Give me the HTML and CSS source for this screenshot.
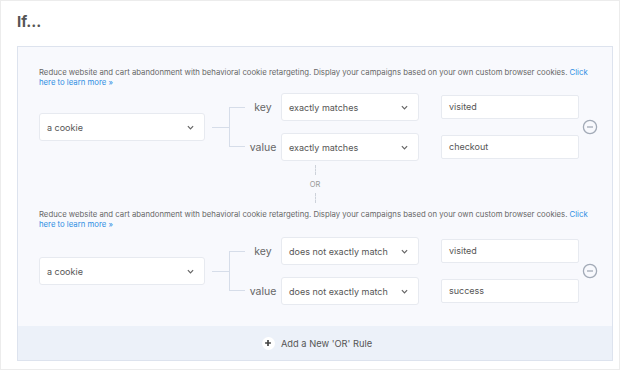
FILE: index.html
```html
<!DOCTYPE html>
<html lang="en">
<head>
    <meta charset="UTF-8">
    <meta name="viewport" content="width=device-width, initial-scale=1.0">
    <title>Cookie Retargeting Rules</title>
    <link rel="stylesheet" href="styles.css">
</head>
<body>
    <div class="card">
        <h2 class="card-title">If...</h2>

        <div class="panel">
            <!-- Rule 1 -->
            <div class="rule">
                <p class="rule-desc">Reduce website and cart abandonment with behavioral cookie retargeting. Display your campaigns based on your own custom browser cookies. <a href="#">Click here to learn more &raquo;</a></p>
                <div class="rule-row">
                    <div class="select select-target">
                        <span>a cookie</span>
                        <svg class="chevron" viewBox="0 0 8 5"><path d="M1 1l3 3 3-3"/></svg>
                    </div>
                    <div class="branch">
                        <span class="stub"></span>
                        <span class="bracket"></span>
                    </div>
                    <div class="pairs">
                        <div class="pair">
                            <span class="pair-label">key</span>
                            <div class="select select-op">
                                <span>exactly matches</span>
                                <svg class="chevron" viewBox="0 0 8 5"><path d="M1 1l3 3 3-3"/></svg>
                            </div>
                            <div class="field">visited</div>
                        </div>
                        <div class="pair">
                            <span class="pair-label">value</span>
                            <div class="select select-op">
                                <span>exactly matches</span>
                                <svg class="chevron" viewBox="0 0 8 5"><path d="M1 1l3 3 3-3"/></svg>
                            </div>
                            <div class="field">checkout</div>
                        </div>
                    </div>
                    <button class="remove" title="Remove rule">
                        <svg viewBox="0 0 16 16"><circle cx="8" cy="8" r="6.6"/><path d="M5 8h6"/></svg>
                    </button>
                </div>
            </div>

            <div class="or-divider">
                <span class="dash"></span>
                <span class="or-label">OR</span>
                <span class="dash"></span>
            </div>

            <!-- Rule 2 -->
            <div class="rule rule-second">
                <p class="rule-desc">Reduce website and cart abandonment with behavioral cookie retargeting. Display your campaigns based on your own custom browser cookies. <a href="#">Click here to learn more &raquo;</a></p>
                <div class="rule-row">
                    <div class="select select-target">
                        <span>a cookie</span>
                        <svg class="chevron" viewBox="0 0 8 5"><path d="M1 1l3 3 3-3"/></svg>
                    </div>
                    <div class="branch">
                        <span class="stub"></span>
                        <span class="bracket"></span>
                    </div>
                    <div class="pairs">
                        <div class="pair">
                            <span class="pair-label">key</span>
                            <div class="select select-op">
                                <span>does not exactly match</span>
                                <svg class="chevron" viewBox="0 0 8 5"><path d="M1 1l3 3 3-3"/></svg>
                            </div>
                            <div class="field">visited</div>
                        </div>
                        <div class="pair">
                            <span class="pair-label">value</span>
                            <div class="select select-op">
                                <span>does not exactly match</span>
                                <svg class="chevron" viewBox="0 0 8 5"><path d="M1 1l3 3 3-3"/></svg>
                            </div>
                            <div class="field">success</div>
                        </div>
                    </div>
                    <button class="remove" title="Remove rule">
                        <svg viewBox="0 0 16 16"><circle cx="8" cy="8" r="6.6"/><path d="M5 8h6"/></svg>
                    </button>
                </div>
            </div>

            <div class="add-rule">
                <span class="add-icon">
                    <svg viewBox="0 0 12 12"><path d="M6 2.5v7M2.5 6h7"/></svg>
                </span>
                <span>Add a New 'OR' Rule</span>
            </div>
        </div>
    </div>
</body>
</html>
```

FILE: styles.css
```css
body {
    margin: 0;
    font-family: Inter, "Open Sans", Arial, sans-serif;
    background-color: #ffffff;
}

.card {
    width: 620px;
    height: 370px;
    box-sizing: border-box;
    border: 1px solid #ececec;
    padding: 11px 6px 0 16px;
    background: white;
}

.card-title {
    margin: 0 0 14px 0;
    font-size: 15px;
    line-height: 20px;
    font-weight: 700;
    color: #555;
}

.panel {
    border: 1px solid #dde3ee;
    background: #f8f9fd;
}

.rule {
    padding: 20px 14px 0 21px;
}

.rule-second {
    padding-top: 0;
}

.rule-desc {
    margin: 0 0 6px 0;
    font-size: 7.75px;
    line-height: 10px;
    color: #666;
    max-width: 556px;
}

.rule-desc a {
    color: #2d8ee3;
    text-decoration: none;
}

.rule-second .rule-desc {
    margin-bottom: 8px;
}

.rule-row {
    display: flex;
    align-items: center;
}

.select {
    display: flex;
    align-items: center;
    justify-content: space-between;
    box-sizing: border-box;
    height: 28px;
    padding: 0 10px 0 7px;
    background: white;
    border: 1px solid #e7eaf0;
    border-radius: 3px;
    font-size: 9px;
    color: #555;
}

.select-target {
    width: 166px;
}

.select-op {
    width: 138px;
}

.chevron {
    width: 7px;
    height: 5px;
    fill: none;
    stroke: #666;
    stroke-width: 1.4;
}

.branch {
    display: flex;
    align-items: center;
    width: 40px;
}

.stub {
    width: 17px;
    height: 1px;
    margin-left: 7px;
    background: #d6dde9;
}

.bracket {
    width: 16px;
    height: 40px;
    box-sizing: border-box;
    border: 1px solid #d6dde9;
    border-right: none;
}

.pairs {
    display: flex;
    flex-direction: column;
    gap: 12px;
}

.pair {
    display: flex;
    align-items: center;
}

.pair-label {
    width: 36px;
    text-align: center;
    font-size: 10.5px;
    color: #666;
}

.field {
    box-sizing: border-box;
    width: 138px;
    height: 24px;
    margin-left: 22px;
    padding: 0 7px;
    line-height: 22px;
    background: white;
    border: 1px solid #e7eaf0;
    border-radius: 2px;
    font-size: 9px;
    color: #555;
}

.remove {
    width: 16px;
    height: 16px;
    margin-left: 3px;
    padding: 0;
    border: none;
    background: none;
    cursor: pointer;
}

.remove svg {
    width: 16px;
    height: 16px;
    fill: none;
    stroke: #a2aab7;
    stroke-width: 1.3;
}

.or-divider {
    display: flex;
    flex-direction: column;
    align-items: center;
    height: 48px;
    padding-top: 4px;
    box-sizing: border-box;
}

.dash {
    height: 10px;
    border-left: 1px dashed #cdd2da;
}

.or-label {
    margin: 5px 0 3px 0;
    font-size: 7.5px;
    line-height: 10px;
    color: #999;
}

.add-rule {
    display: flex;
    align-items: center;
    justify-content: center;
    gap: 6px;
    height: 34px;
    margin-top: 21px;
    background: #ecf1f9;
    font-size: 9.3px;
    color: #555;
}

.add-icon {
    display: flex;
    align-items: center;
    justify-content: center;
    width: 13px;
    height: 13px;
    margin-left: 4px;
    border-radius: 50%;
    background: white;
}

.add-icon svg {
    width: 10px;
    height: 10px;
    fill: none;
    stroke: #444;
    stroke-width: 2;
}
```
